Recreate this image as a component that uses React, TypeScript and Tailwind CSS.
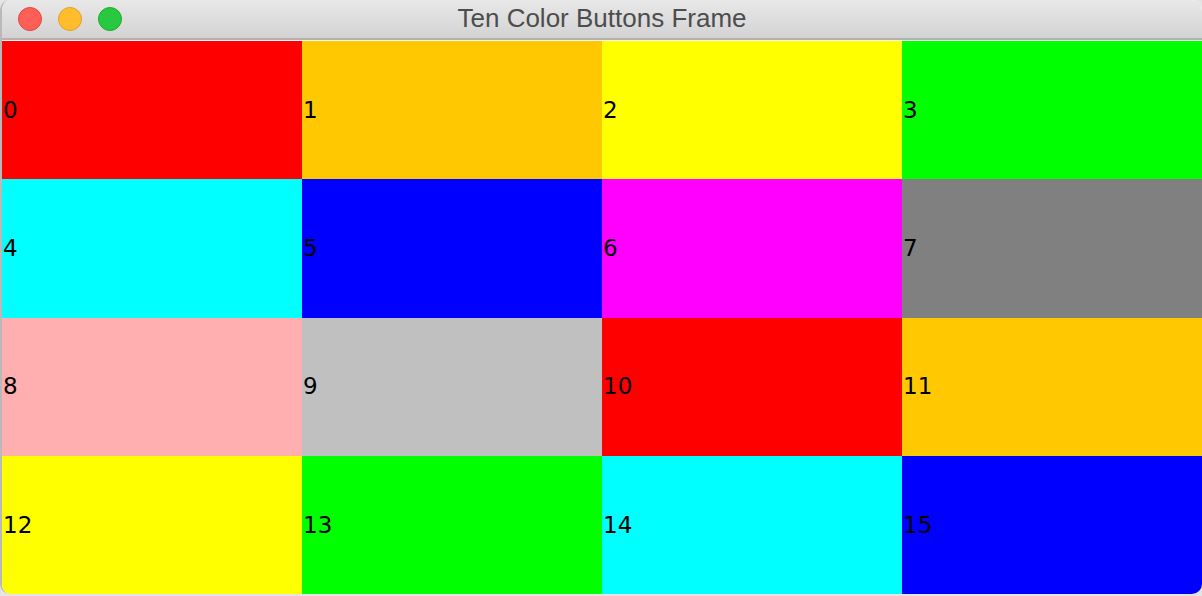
import React from 'react';

const cells = [
  '#ff0000', '#ffc800', '#ffff00', '#00ff00',
  '#00ffff', '#0000ff', '#ff00ff', '#808080',
  '#ffafaf', '#c0c0c0', '#ff0000', '#ffc800',
  '#ffff00', '#00ff00', '#00ffff', '#0000ff',
];

function TrafficLights() {
  return (
    <div className="flex items-center gap-4 pl-4">
      <span className="h-6 w-6 rounded-full border border-[#e0443e] bg-[#ff5f57]" />
      <span className="h-6 w-6 rounded-full border border-[#dea123] bg-[#ffbd2e]" />
      <span className="h-6 w-6 rounded-full border border-[#1aab29] bg-[#28c940]" />
    </div>
  );
}

export default function App() {
  return (
    <div className="h-[596px] w-[1202px] overflow-hidden bg-[#e4e4e4]">
      <div className="flex h-[594px] w-[1202px] flex-col overflow-hidden rounded-[10px] border-l-2 border-[#b9b9b9] bg-white">
        {/* Title bar */}
        <div className="relative flex h-[38px] shrink-0 items-center bg-gradient-to-b from-[#e8e8e8] to-[#d3d3d3]">
          <TrafficLights />
          <div
            className="absolute left-0 top-0 flex h-full w-[1200px] items-center justify-center pb-px text-[26px] text-[#4d4d4d]"
            style={{ fontFamily: '"Liberation Sans", Arial, sans-serif' }}
          >
            Ten Color Buttons Frame
          </div>
        </div>
        <div className="h-[2px] shrink-0 bg-[#b2b2b2]" />
        <div className="h-px shrink-0 bg-[#f4f4f4]" />

        {/* Buttons */}
        <div className="grid w-[1200px] flex-1 grid-cols-4 grid-rows-4">
          {cells.map((c, i) => (
            <div
              key={i}
              className="flex items-center pl-px text-[23px] text-black"
              style={{ backgroundColor: c, fontFamily: '"DejaVu Sans", sans-serif' }}
            >
              {i}
            </div>
          ))}
        </div>
      </div>
    </div>
  );
}
